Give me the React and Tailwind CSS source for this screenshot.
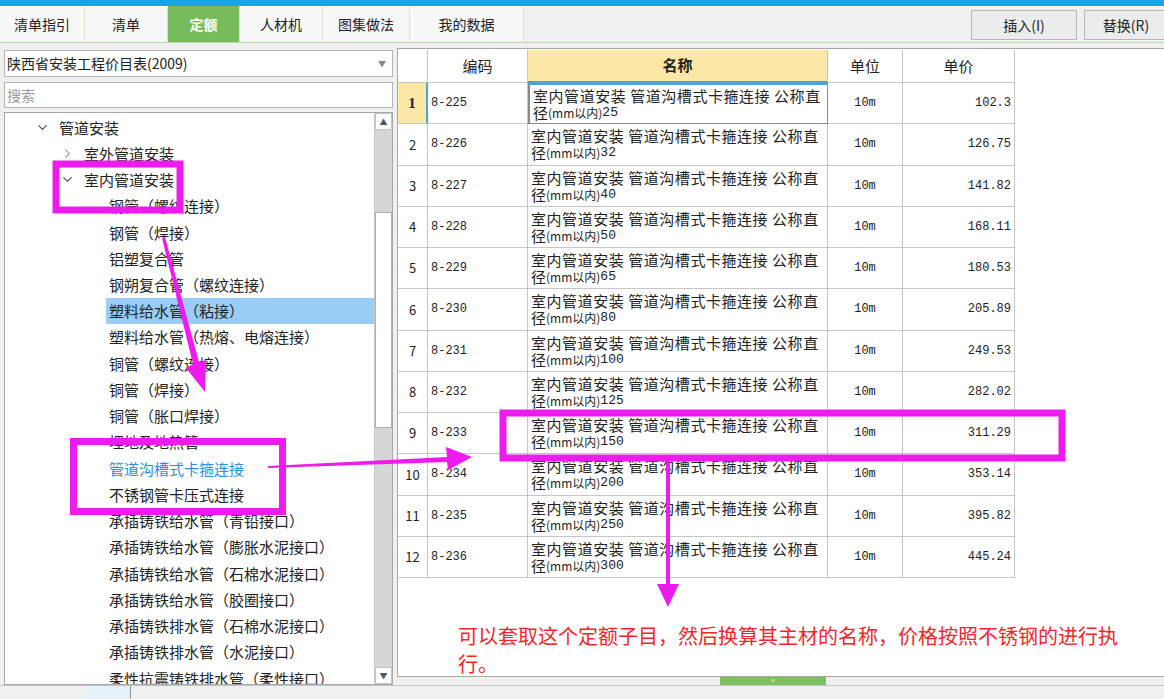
import React from 'react'
import { ChevronDown, ChevronRight } from 'lucide-react'

const tabs = [
  { label: '清单指引', w: 'w-[85px]' },
  { label: '清单', w: 'w-[83px]' },
  { label: '定额', w: 'w-[72px]', active: true },
  { label: '人材机', w: 'w-[83px]' },
  { label: '图集做法', w: 'w-[87px]' },
  { label: '我的数据', w: 'w-[114px]' },
]

const tree = [
  { text: '管道安装', level: 0, open: true },
  { text: '室外管道安装', level: 1, closed: true },
  { text: '室内管道安装', level: 1, open: true },
  { text: '钢管（螺纹连接）' },
  { text: '钢管（焊接）' },
  { text: '铝塑复合管' },
  { text: '钢朔复合管（螺纹连接）' },
  { text: '塑料给水管（粘接）', selected: true },
  { text: '塑料给水管（热熔、电熔连接）' },
  { text: '铜管（螺纹连接）' },
  { text: '铜管（焊接）' },
  { text: '铜管（胀口焊接）' },
  { text: '埋地及地热管' },
  { text: '管道沟槽式卡箍连接', blue: true },
  { text: '不锈钢管卡压式连接' },
  { text: '承插铸铁给水管（青铅接口）' },
  { text: '承插铸铁给水管（膨胀水泥接口）' },
  { text: '承插铸铁给水管（石棉水泥接口）' },
  { text: '承插铸铁给水管（胶圈接口）' },
  { text: '承插铸铁排水管（石棉水泥接口）' },
  { text: '承插铸铁排水管（水泥接口）' },
  { text: '柔性抗震铸铁排水管（柔性接口）' },
]

const rows = [
  ['8-225', '25', '102.3'],
  ['8-226', '32', '126.75'],
  ['8-227', '40', '141.82'],
  ['8-228', '50', '168.11'],
  ['8-229', '65', '180.53'],
  ['8-230', '80', '205.89'],
  ['8-231', '100', '249.53'],
  ['8-232', '125', '282.02'],
  ['8-233', '150', '311.29'],
  ['8-234', '200', '353.14'],
  ['8-235', '250', '395.82'],
  ['8-236', '300', '445.24'],
]

const cjk = "font-['Noto_Sans_CJK_SC',sans-serif]"
const mono = "font-['Liberation_Mono','Noto_Sans_CJK_SC',monospace]"

function TreeRow({ item }) {
  let pad = 'pl-[104px]'
  if (item.level === 0) pad = 'pl-[30px]'
  if (item.level === 1) pad = 'pl-[55px]'
  return (
    <div className={`h-[26.24px] flex items-center whitespace-nowrap ${pad}`}>
      {item.level !== undefined && (
        <span className="w-[24px] flex items-center">
          {item.open ? (
            <ChevronDown size={15} strokeWidth={2} className="text-[#555]" />
          ) : (
            <ChevronRight size={15} strokeWidth={2} className="text-[#aaa]" />
          )}
        </span>
      )}
      <span
        className={`h-full flex items-center text-[15px] leading-none ${
          item.selected ? 'bg-[#99cdf7] w-[271px] -ml-[3px] pl-[3px]' : ''
        } ${item.blue ? 'text-[#2b8fe6]' : 'text-[#222]'}`}
      >
        {item.text}
      </span>
    </div>
  )
}

function Annotations() {
  const c = '#ee1bee'
  return (
    <svg className="absolute inset-0 pointer-events-none" width="1164" height="699">
      <rect x="56" y="164" width="124" height="46" fill="none" stroke={c} strokeWidth="7" />
      <rect x="73.5" y="441.5" width="209" height="70" fill="none" stroke={c} strokeWidth="7" />
      <rect x="503" y="413" width="559" height="45" fill="none" stroke={c} strokeWidth="7" />
      {/* arrow from tree header down */}
      <polygon points="162,238 165,237 199,362 206,360 205,392 186,368 193,364" fill={c} />
      {/* arrow to table row */}
      <polygon points="268,466 447,457 446,447 472,457 448,470 447,462 268,468" fill={c} />
      {/* arrow down to note */}
      <polygon points="666,458 670,458 670,584 679,584 668,607 657,584 666,584" fill={c} />
    </svg>
  )
}

export default function App() {
  return (
    <div className={`relative w-[1164px] h-[699px] overflow-hidden bg-[#f0f0f0] ${cjk}`}>
      <div className="h-[6px] bg-[#14a6ea]" />

      {/* tab bar */}
      <div className="h-[37px] flex border-b border-[#b9dcaa] bg-[#f0f0f0]">
        {tabs.map((t) => (
          <div
            key={t.label}
            className={`${t.w} h-full flex items-center justify-center text-[14px] border-r border-[#d5e4cf] ${
              t.active ? 'bg-[#77bb5c] text-white font-bold' : 'bg-[#f7f7f7] text-[#222]'
            }`}
          >
            {t.label}
          </div>
        ))}
        <div className="flex-1" />
        <button className="mt-[4px] w-[106px] h-[30px] border border-[#b5b5b5] bg-[#ececec] text-[14px] text-[#222]">
          插入(I)
        </button>
        <button className="mt-[4px] ml-[7px] w-[84px] h-[30px] border border-[#b5b5b5] bg-[#ececec] text-[14px] text-[#222] -mr-[4px]">
          替换(R)
        </button>
      </div>

      {/* body */}
      <div className="h-[642px] flex">
        {/* left panel */}
        <div className="w-[397px] px-[4px] pt-[7px] flex flex-col">
          <div className="h-[27px] bg-white border border-[#b4b4b4] flex items-center pl-[2px] pr-[6px]">
            <span className="flex-1 text-[14px] text-[#222] whitespace-nowrap">陕西省安装工程价目表(2009)</span>
            <span className="text-[8px] text-[#888]">▼</span>
          </div>
          <div className="mt-[5px] h-[26px] bg-white border border-[#b4b4b4] flex items-center pl-[2px] text-[14px] text-[#999]">
            搜索
          </div>
          <div className="mt-[4px] flex-1 bg-white border border-[#a8a8a8] flex overflow-hidden">
            <div className="flex-1 overflow-hidden pt-[1px]">
              {tree.map((item, i) => (
                <TreeRow key={i} item={item} />
              ))}
            </div>
            <div className="w-[18px] flex flex-col bg-[#d6d6d6] border-l border-[#c8c8c8]">
              <div className="h-[17px] bg-white border border-[#c4c4c4] flex items-center justify-center text-[8px] text-[#555]">▲</div>
              <div className="h-[82px]" />
              <div className="h-[216px] bg-white border border-[#b0b0b0]" />
              <div className="flex-1" />
              <div className="h-[17px] bg-white border border-[#c4c4c4] flex items-center justify-center text-[8px] text-[#555]">▼</div>
            </div>
          </div>
        </div>

        {/* right panel */}
        <div className="flex-1 flex flex-col pt-[5px]">
          <div className="h-[629px] bg-white border border-[#a8a8a8] border-r-0 relative">
            <div className="pt-[1px]">
              {/* header */}
              <div className="flex h-[33px] text-[15px] text-[#222]">
                <div className="w-[30px] border-r border-b border-[#c6c6c6]" />
                <div className="w-[100px] border-r border-b border-[#c6c6c6] flex items-center justify-center">编码</div>
                <div className="w-[300px] border-r border-b-2 border-b-[#4aa6da] border-r-[#c6c6c6] bg-[#fce8a6] flex items-center justify-center font-bold">名称</div>
                <div className="w-[75px] border-r border-b border-[#c6c6c6] flex items-center justify-center">单位</div>
                <div className="w-[112px] border-r border-b border-[#c6c6c6] flex items-center justify-center">单价</div>
              </div>
              {rows.map((r, i) => (
                <div key={r[0]} className="flex h-[41.25px] text-[#222]">
                  <div
                    className={`w-[30px] border-r border-b border-[#c6c6c6] flex items-center justify-center ${
                      i === 0
                        ? "bg-[#fce8a6] font-bold font-['Liberation_Serif',serif] text-[15px] border-r-[#4aa6da] border-r-2"
                        : "text-[13px]"
                    }`}
                  >
                    {i + 1}
                  </div>
                  <div className={`w-[100px] border-r border-b border-[#c6c6c6] flex items-center pl-[3px] text-[12px] ${mono}`}>
                    {r[0]}
                  </div>
                  <div
                    className={`w-[300px] border-b border-r flex flex-col justify-center pl-[3px] text-[15px] leading-[17px] whitespace-nowrap ${
                      i === 0 ? 'border-2 border-[#8a8a8a] border-t-[#4aa6da]' : 'border-[#c6c6c6]'
                    }`}
                  >
                    <span className="block h-[17px] tracking-[0.55px]">室内管道安装 管道沟槽式卡箍连接 公称直</span>
                    <span className="block h-[17px]">
                      <span className="inline-block h-[17px] leading-[17px] align-top">径</span>
                      <span className="inline-block h-[17px] leading-[17px] align-top text-[12px]">(mm以内)</span>
                      <span className={`inline-block h-[17px] leading-[17px] align-top text-[13px] ${mono}`}>{r[1]}</span>
                    </span>
                  </div>
                  <div className={`w-[75px] border-r border-b border-[#c6c6c6] flex items-center justify-center text-[12px] ${mono}`}>
                    10m
                  </div>
                  <div className={`w-[112px] border-r border-b border-[#c6c6c6] flex items-center justify-end pr-[3px] text-[12px] ${mono}`}>
                    {r[2]}
                  </div>
                </div>
              ))}
            </div>
            <div className="absolute left-[60px] top-[573px] text-[20px] leading-[28px] text-[#f0262b] whitespace-nowrap">
              <div>可以套取这个定额子目，然后换算其主材的名称，价格按照不锈钢的进行执</div>
              <div>行。</div>
            </div>
          </div>
          <div className="h-[8px] pl-[323px]">
            <div className="w-[106px] h-full bg-[#7cc062] flex items-start justify-center text-[7px] leading-[8px] text-white">^</div>
          </div>
        </div>
      </div>

      {/* bottom strip */}
      <div className="h-[14px] border-t border-[#c4c4c4] flex">
        <div className="w-[88px]" />
        <div className="w-[43px] bg-[#e4f1f8] border-r border-[#999]" />
      </div>

      <Annotations />
    </div>
  )
}
